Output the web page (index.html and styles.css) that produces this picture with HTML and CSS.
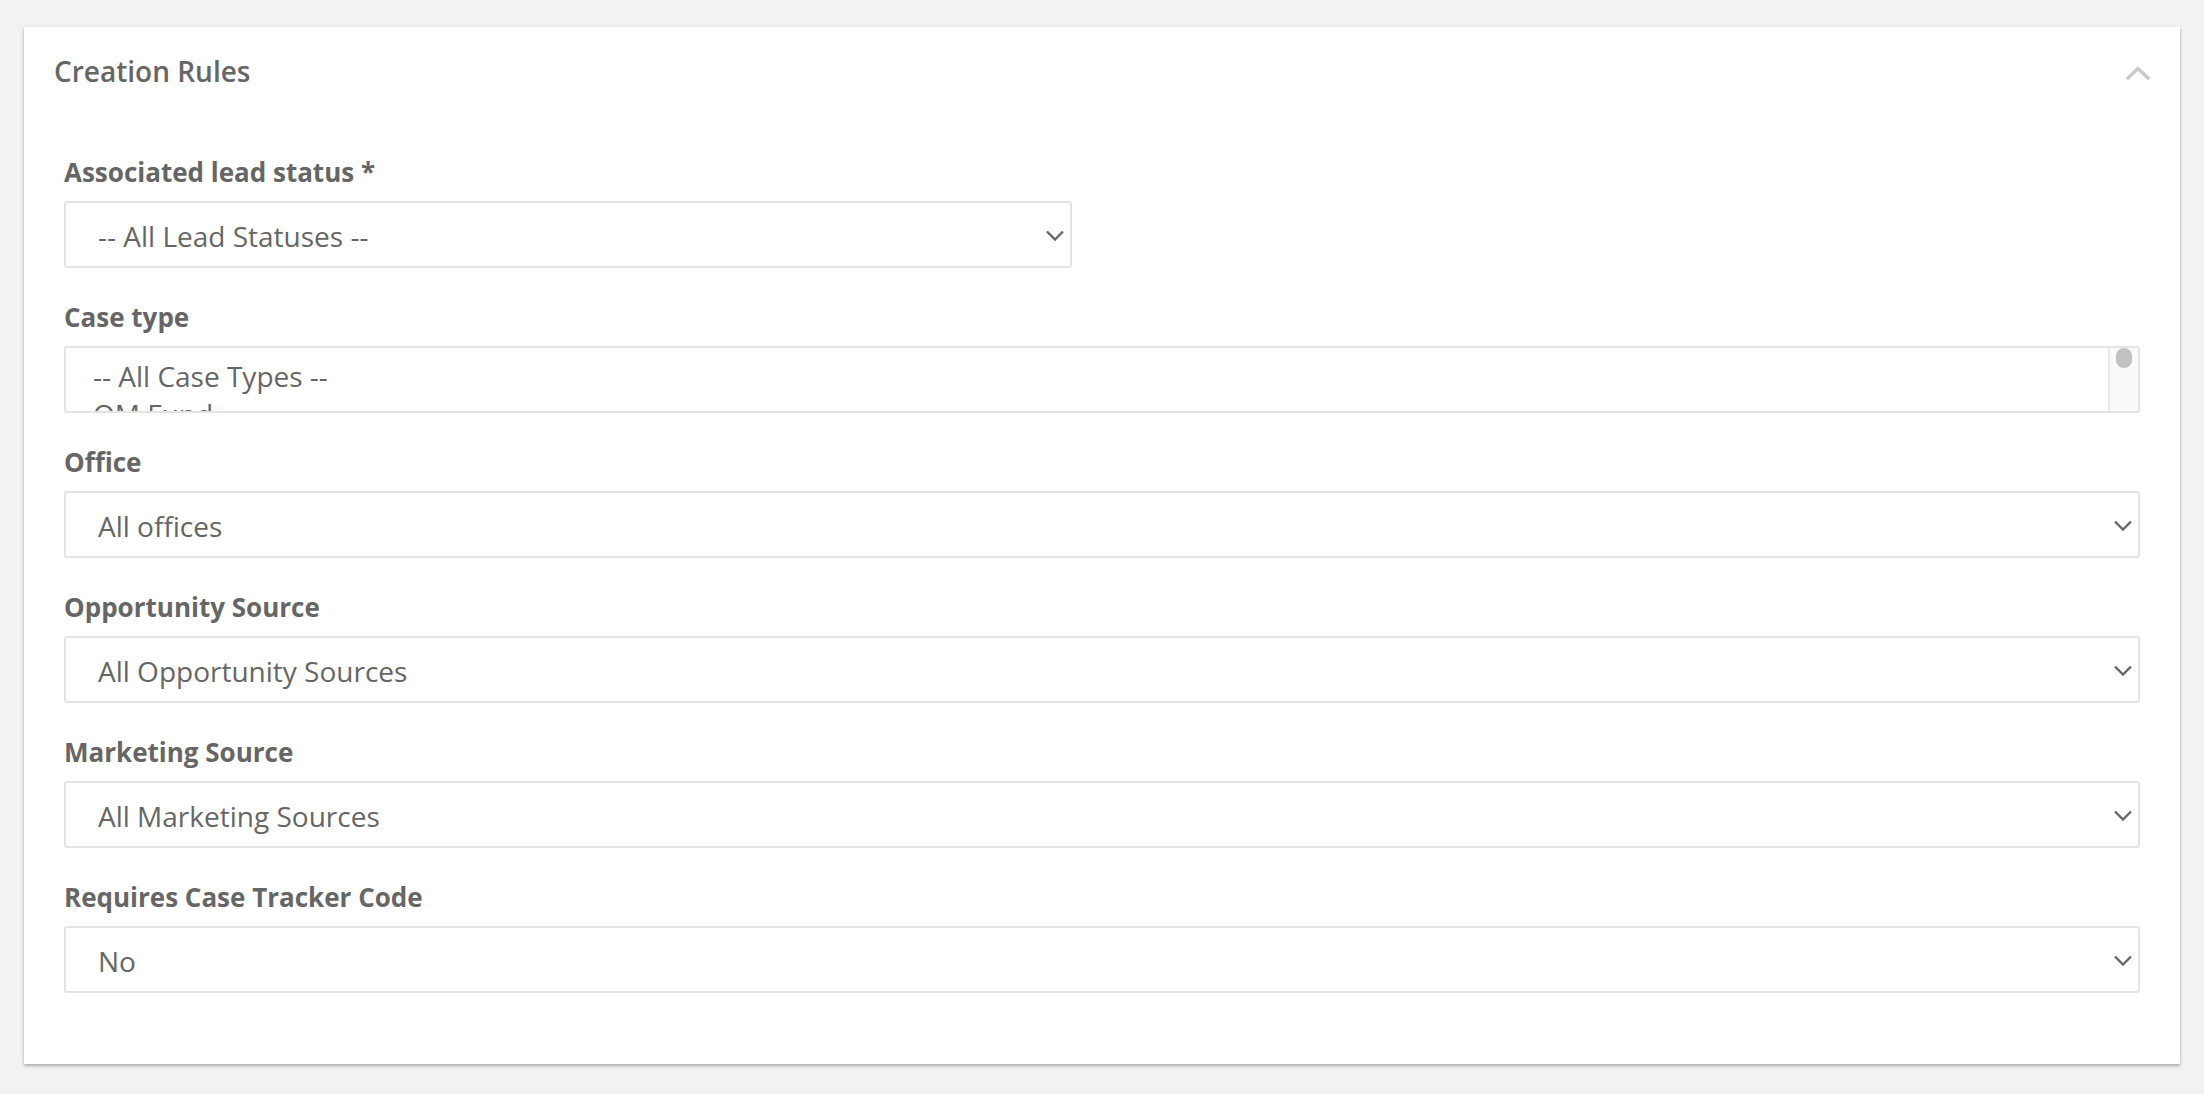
FILE: index.html
```html
<!DOCTYPE html>
<html lang="en">
<head>
<meta charset="utf-8">
<title>Creation Rules</title>
<link rel="stylesheet" href="styles.css">
</head>
<body>
<section class="card">
  <header class="card-header">
    <h2 class="card-title">Creation Rules</h2>
    <svg class="collapse-icon" width="24" height="14" viewBox="0 0 24 14" aria-hidden="true"><polyline points="2,12 12,2.5 22,12" fill="none" stroke="#c9c9c9" stroke-width="3.4" stroke-linecap="square"/></svg>
  </header>
  <div class="card-body">
    <div class="field">
      <label class="field-label">Associated lead status *</label>
      <div class="select-wrap narrow">
        <select class="select"><option>-- All Lead Statuses --</option></select>
        <svg class="caret" width="18" height="11" viewBox="0 0 18 11" aria-hidden="true"><polyline points="1,1.5 9,9.5 17,1.5" fill="none" stroke="#666" stroke-width="2.4"/></svg>
      </div>
    </div>
    <div class="field">
      <label class="field-label">Case type</label>
      <div class="listbox">
        <div class="options">
          <div class="option">-- All Case Types --</div>
          <div class="option">OM Fund</div>
        </div>
        <div class="scrollbar"><div class="thumb"></div></div>
      </div>
    </div>
    <div class="field">
      <label class="field-label">Office</label>
      <div class="select-wrap">
        <select class="select"><option>All offices</option></select>
        <svg class="caret" width="18" height="11" viewBox="0 0 18 11" aria-hidden="true"><polyline points="1,1.5 9,9.5 17,1.5" fill="none" stroke="#666" stroke-width="2.4"/></svg>
      </div>
    </div>
    <div class="field">
      <label class="field-label">Opportunity Source</label>
      <div class="select-wrap">
        <select class="select"><option>All Opportunity Sources</option></select>
        <svg class="caret" width="18" height="11" viewBox="0 0 18 11" aria-hidden="true"><polyline points="1,1.5 9,9.5 17,1.5" fill="none" stroke="#666" stroke-width="2.4"/></svg>
      </div>
    </div>
    <div class="field">
      <label class="field-label">Marketing Source</label>
      <div class="select-wrap">
        <select class="select"><option>All Marketing Sources</option></select>
        <svg class="caret" width="18" height="11" viewBox="0 0 18 11" aria-hidden="true"><polyline points="1,1.5 9,9.5 17,1.5" fill="none" stroke="#666" stroke-width="2.4"/></svg>
      </div>
    </div>
    <div class="field">
      <label class="field-label">Requires Case Tracker Code</label>
      <div class="select-wrap">
        <select class="select"><option>No</option></select>
        <svg class="caret" width="18" height="11" viewBox="0 0 18 11" aria-hidden="true"><polyline points="1,1.5 9,9.5 17,1.5" fill="none" stroke="#666" stroke-width="2.4"/></svg>
      </div>
    </div>
  </div>
</section>
</body>
</html>
```
FILE: styles.css
```css
* { box-sizing: border-box; }

html, body {
  margin: 0;
  background: #f2f2f2;
}

body {
  padding: 27px 24px 30px;
  font-family: "Open Sans", "Noto Sans", sans-serif;
  color: #666;
}

.card {
  background: #fff;
  box-shadow: 0 2px 3px rgba(0, 0, 0, 0.28), 0 0 4px rgba(0, 0, 0, 0.06);
}

.card-header {
  display: flex;
  justify-content: space-between;
  align-items: center;
  padding: 24px 30px 22px 30px;
}

.card-title {
  margin: 0;
  font-size: 28px;
  line-height: 40px;
  font-weight: 600;
  color: #666;
}

.collapse-icon {
  display: block;
  margin-top: 4px;
}

.card-body {
  padding: 40px 40px 41px;
}

.field {
  margin-bottom: 30px;
}

.field-label {
  display: block;
  font-size: 26px;
  line-height: 38px;
  font-weight: 700;
  color: #666;
  margin-bottom: 10px;
}

.select-wrap {
  position: relative;
  width: 100%;
}

.select-wrap.narrow {
  width: 1008px;
}

.select {
  display: block;
  width: 100%;
  height: 67px;
  margin: 0;
  padding: 2px 40px 0 32px;
  border: 2px solid #e4e4e4;
  border-radius: 3px;
  background: #fff;
  font-family: "Open Sans", "Noto Sans", sans-serif;
  font-size: 28px;
  color: #666;
  -webkit-appearance: none;
  appearance: none;
  outline: none;
}

.caret {
  position: absolute;
  right: 8px;
  top: 50%;
  margin-top: -5px;
  pointer-events: none;
}

.listbox {
  display: flex;
  height: 67px;
  border: 2px solid #e4e4e4;
  border-radius: 3px;
  background: #fff;
  overflow: hidden;
}

.options {
  flex: 1;
  overflow: hidden;
  padding: 9px 0 0 27px;
}

.option {
  font-size: 28px;
  line-height: 38px;
  color: #666;
  white-space: nowrap;
}

.scrollbar {
  width: 30px;
  flex: none;
  display: flex;
  justify-content: center;
  align-items: flex-start;
  background: #fafafa;
  border-left: 2px solid #e8e8e8;
}

.thumb {
  width: 16px;
  height: 20px;
  border-radius: 8px;
  background: #c1c1c1;
}
```
